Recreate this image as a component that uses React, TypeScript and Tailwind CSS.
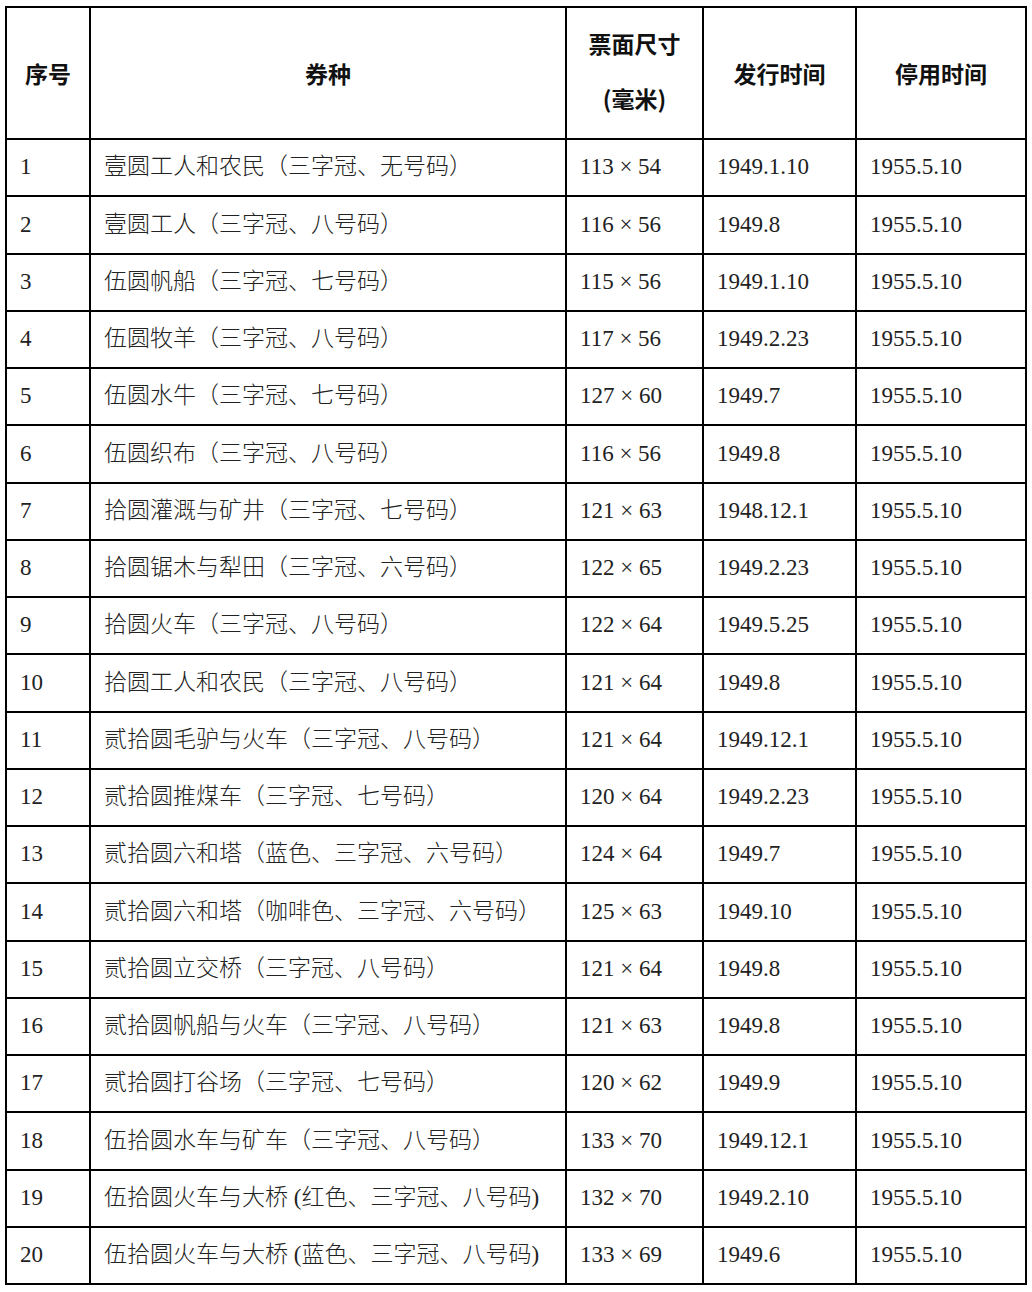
const ROWS = [
  ['1', '壹圆工人和农民（三字冠、无号码）', '113 × 54', '1949.1.10'],
  ['2', '壹圆工人（三字冠、八号码）', '116 × 56', '1949.8'],
  ['3', '伍圆帆船（三字冠、七号码）', '115 × 56', '1949.1.10'],
  ['4', '伍圆牧羊（三字冠、八号码）', '117 × 56', '1949.2.23'],
  ['5', '伍圆水牛（三字冠、七号码）', '127 × 60', '1949.7'],
  ['6', '伍圆织布（三字冠、八号码）', '116 × 56', '1949.8'],
  ['7', '拾圆灌溉与矿井（三字冠、七号码）', '121 × 63', '1948.12.1'],
  ['8', '拾圆锯木与犁田（三字冠、六号码）', '122 × 65', '1949.2.23'],
  ['9', '拾圆火车（三字冠、八号码）', '122 × 64', '1949.5.25'],
  ['10', '拾圆工人和农民（三字冠、八号码）', '121 × 64', '1949.8'],
  ['11', '贰拾圆毛驴与火车（三字冠、八号码）', '121 × 64', '1949.12.1'],
  ['12', '贰拾圆推煤车（三字冠、七号码）', '120 × 64', '1949.2.23'],
  ['13', '贰拾圆六和塔（蓝色、三字冠、六号码）', '124 × 64', '1949.7'],
  ['14', '贰拾圆六和塔（咖啡色、三字冠、六号码）', '125 × 63', '1949.10'],
  ['15', '贰拾圆立交桥（三字冠、八号码）', '121 × 64', '1949.8'],
  ['16', '贰拾圆帆船与火车（三字冠、八号码）', '121 × 63', '1949.8'],
  ['17', '贰拾圆打谷场（三字冠、七号码）', '120 × 62', '1949.9'],
  ['18', '伍拾圆水车与矿车（三字冠、八号码）', '133 × 70', '1949.12.1'],
  ['19', '伍拾圆火车与大桥 (红色、三字冠、八号码)', '132 × 70', '1949.2.10'],
  ['20', '伍拾圆火车与大桥 (蓝色、三字冠、八号码)', '133 × 69', '1949.6'],
];

const STOP_DATE = '1955.5.10';

export default function App() {
  return (
    <div className="bg-white min-h-[1292px] pl-[5px] pt-[6px]">
      <div
        className="w-[1022px] grid grid-cols-[82px_474px_135px_151px_168px] grid-rows-[130px_repeat(20,55.25px)] gap-[2px] p-[2px] bg-black text-black"
        style={{ fontFamily: '"Liberation Serif", "Noto Sans CJK SC", serif' }}
      >
        {/* Header */}
        <HeaderCell>序号</HeaderCell>
        <HeaderCell>券种</HeaderCell>
        <HeaderCell>
          <span className="leading-[55px] -mt-[4px]">
            票面尺寸
            <br />
            (毫米)
          </span>
        </HeaderCell>
        <HeaderCell>发行时间</HeaderCell>
        <HeaderCell>停用时间</HeaderCell>

        {/* Rows */}
        {ROWS.map(([no, name, size, issued]) => (
          <Row key={no} no={no} name={name} size={size} issued={issued} />
        ))}
      </div>
    </div>
  );
}

function HeaderCell({ children }: { children: React.ReactNode }) {
  return (
    <div
      className="bg-white flex items-center justify-center text-center text-[23px] font-semibold text-[#111]"
      style={{ fontFamily: '"Noto Sans CJK SC", "Liberation Sans", sans-serif' }}
    >
      {children}
    </div>
  );
}

function Row({ no, name, size, issued }: { no: string; name: string; size: string; issued: string }) {
  const cell = 'bg-white flex items-center pl-[13px] text-[23px] text-[#222] whitespace-nowrap';
  return (
    <>
      <div className={cell}>{no}</div>
      <div className={`${cell} font-light`}>{name}</div>
      <div className={cell}>{size}</div>
      <div className={cell}>{issued}</div>
      <div className={cell}>{STOP_DATE}</div>
    </>
  );
}
